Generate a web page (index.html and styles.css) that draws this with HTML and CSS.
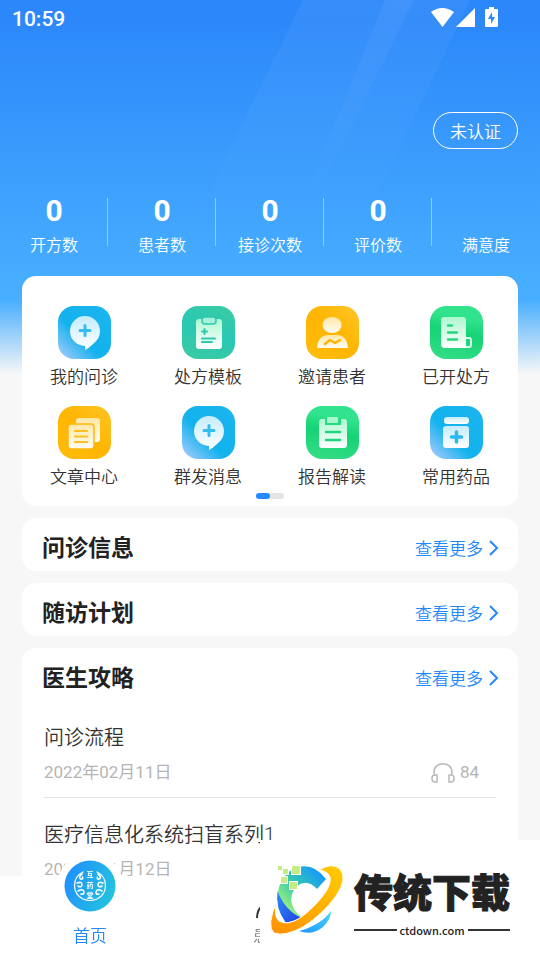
FILE: index.html
```html
<!DOCTYPE html>
<html lang="zh-CN">
<head>
<meta charset="utf-8">
<meta name="viewport" content="width=device-width, initial-scale=1">
<title>首页</title>
<link rel="stylesheet" href="styles.css">
</head>
<body>
<svg class="defs" aria-hidden="true">
  <defs>
    <linearGradient id="blue" x1="0" y1="1" x2="1" y2="0"><stop offset="0.08" stop-color="#94c8fb"/><stop offset="0.42" stop-color="#12b2ed"/><stop offset="1" stop-color="#1cb5ef"/></linearGradient>
    <linearGradient id="teal" x1="0.3" y1="1" x2="0.7" y2="0"><stop offset="0" stop-color="#3bcaa4"/><stop offset="0.5" stop-color="#29c7b4"/><stop offset="1" stop-color="#37cba6"/></linearGradient>
    <linearGradient id="amber" x1="0" y1="1" x2="1" y2="0"><stop offset="0" stop-color="#ffbd0c"/><stop offset="0.5" stop-color="#ffb502"/><stop offset="1" stop-color="#ffc525"/></linearGradient>
    <linearGradient id="green" x1="0.4" y1="1" x2="0.6" y2="0"><stop offset="0" stop-color="#32dc84"/><stop offset="0.5" stop-color="#15d375"/><stop offset="0.8" stop-color="#31e38c"/></linearGradient>
    <linearGradient id="whiteBlue" x1="0" y1="0" x2="0" y2="1"><stop offset="0" stop-color="#c5ecfd"/><stop offset="1" stop-color="#fff"/></linearGradient>
    <linearGradient id="whiteGreen" x1="0" y1="0" x2="0" y2="1"><stop offset="0" stop-color="#adf8d0"/><stop offset="1" stop-color="#fff"/></linearGradient>
    <linearGradient id="whiteAmber" x1="0" y1="0" x2="0" y2="1"><stop offset="0" stop-color="#ffe7a6"/><stop offset="1" stop-color="#fffdf4"/></linearGradient>
    <linearGradient id="home" x1="0" y1="0.3" x2="1" y2="0.7"><stop offset="0" stop-color="#2090fb"/><stop offset="1" stop-color="#24c4df"/></linearGradient>
    <linearGradient id="orbit" x1="0" y1="1" x2="1" y2="0"><stop offset="0" stop-color="#ff8f00"/><stop offset="1" stop-color="#ffcd00"/></linearGradient>
    <linearGradient id="arc" x1="0.1" y1="1" x2="0.9" y2="0.1"><stop offset="0.2" stop-color="#9cf07c"/><stop offset="0.55" stop-color="#35c9ae"/><stop offset="1" stop-color="#1298fb"/></linearGradient>
    <linearGradient id="deep" x1="0" y1="0" x2="1" y2="1"><stop offset="0" stop-color="#2f8dfb"/><stop offset="1" stop-color="#1f3fe0"/></linearGradient>
    <linearGradient id="tail" x1="0" y1="1" x2="1" y2="0"><stop offset="0" stop-color="#2393fb"/><stop offset="1" stop-color="#42d9ff"/></linearGradient>
  </defs>
</svg>

<div class="app">
  <header class="hero">
    <svg class="rays" viewBox="0 0 540 270" preserveAspectRatio="none" aria-hidden="true">
      <defs><linearGradient id="ray" x1="0" y1="0" x2="0" y2="1"><stop offset="0" stop-color="#fff" stop-opacity="0.05"/><stop offset="1" stop-color="#fff" stop-opacity="0"/></linearGradient></defs>
      <path fill="url(#ray)" d="M303 0H470L360 230H190Z"/>
      <path fill="url(#ray)" d="M385 0H414L310 210H300Z"/>
    </svg>
    <div class="status">
      <time>10:59</time>
      <svg class="status-icons" width="68" height="22" viewBox="0 0 68 22" fill="#fff" aria-label="状态">
        <path d="M1 5Q12-3 24 5L12.500 20ZM26 20L45 1V20Z"/>
        <path fill-rule="evenodd" d="M56 2h3V0h5v2h3q1 0 1 1v16q0 1-1 1H56q-1 0-1-1V3q0-1 1-1ZM62 5l-4 7h3v5l4-7h-3Z"/>
      </svg>
    </div>
    <div class="verify"><button type="button">未认证</button></div>
    <dl class="stats">
      <div><dt>开方数</dt><dd>0</dd></div>
      <div><dt>患者数</dt><dd>0</dd></div>
      <div><dt>接诊次数</dt><dd>0</dd></div>
      <div><dt>评价数</dt><dd>0</dd></div>
      <div><dt>满意度</dt><dd></dd></div>
    </dl>
  </header>

  <main class="content">
    <section class="card services">
      <a href="#"><svg viewBox="0 0 53 53"><rect width="53" height="53" rx="16" fill="url(#blue)"/><path fill="url(#whiteBlue)" d="M27 10a15 15 0 0 1 15 15q0 8-7 13-4 4-8 6v-4a15 15 0 0 1 0-30Z"/><path stroke="#35bcef" stroke-width="3" stroke-linecap="round" d="M27 19.500v10M22 24.500h10"/></svg>我的问诊</a>
      <a href="#"><svg viewBox="0 0 53 53"><rect width="53" height="53" rx="16" fill="url(#teal)"/><rect x="14" y="13" width="26" height="30" rx="3" fill="url(#whiteGreen)"/><rect x="20" y="11" width="14" height="7" rx="3" fill="#a8efd9" stroke="#2dc8ae" stroke-width="1.500"/><path stroke="#2dc8ae" stroke-width="2" stroke-linecap="round" d="M22.500 23v5M20 25.500h5M20 32.500h13M20 36h10"/></svg>处方模板</a>
      <a href="#"><svg viewBox="0 0 53 53"><rect width="53" height="53" rx="16" fill="url(#amber)"/><ellipse cx="26" cy="19" rx="9.500" ry="8" fill="url(#whiteAmber)"/><path fill="url(#whiteAmber)" d="M11 42q1-13 12-13h7q11 0 12 13Z"/><path fill="none" stroke="#ffb502" stroke-width="2.500" stroke-linecap="round" stroke-linejoin="round" d="M19 38l5-4 5 3 5-3"/></svg>邀请患者</a>
      <a href="#"><svg viewBox="0 0 53 53"><rect width="53" height="53" rx="16" fill="url(#green)"/><rect x="34.500" y="32" width="6.500" height="9" rx="2" fill="none" stroke="#d5ffe9" stroke-width="2"/><path fill="url(#whiteGreen)" d="M14 11h19q3 0 3 3v28H15q-4 0-4-4V14q0-3 3-3Z"/><path stroke="#27d67e" stroke-width="2.400" stroke-linecap="round" d="M18 19.500h4M18 26.500h9M18 33.500h9"/></svg>已开处方</a>
      <a href="#"><svg viewBox="0 0 53 53"><rect width="53" height="53" rx="16" fill="url(#amber)"/><rect x="18" y="12" width="24" height="24" rx="3" fill="url(#whiteAmber)"/><rect x="10" y="18" width="26" height="25" rx="3" fill="url(#whiteAmber)" stroke="#ffb80b" stroke-width="1.500"/><path stroke="#ffbd20" stroke-width="2.200" stroke-linecap="round" d="M17 25h12M17 30.500h12M17 36h12"/></svg>文章中心</a>
      <a href="#"><svg viewBox="0 0 53 53"><rect width="53" height="53" rx="16" fill="url(#blue)"/><path fill="url(#whiteBlue)" d="M27 10a15 15 0 0 1 15 15q0 8-7 13-4 4-8 6v-4a15 15 0 0 1 0-30Z"/><path stroke="#35bcef" stroke-width="3" stroke-linecap="round" d="M27 19.500v10M22 24.500h10"/></svg>群发消息</a>
      <a href="#"><svg viewBox="0 0 53 53"><rect width="53" height="53" rx="16" fill="url(#green)"/><rect x="13" y="13" width="28" height="29" rx="3" fill="url(#whiteGreen)"/><path fill="#25da80" d="M19 12h16v7H19Z"/><rect x="21" y="11" width="11" height="6" rx="1" fill="#a7f7cf"/><path stroke="#20d57b" stroke-width="2.400" stroke-linecap="round" d="M20 26h14M20 34h14"/></svg>报告解读</a>
      <a href="#"><svg viewBox="0 0 53 53"><rect width="53" height="53" rx="16" fill="url(#blue)"/><rect x="14" y="11" width="25" height="7" rx="3" fill="url(#whiteBlue)"/><rect x="13" y="20" width="26" height="22" rx="3" fill="url(#whiteBlue)"/><path stroke="#2bb9ef" stroke-width="3.500" stroke-linecap="round" d="M26.500 26v10M21.500 31h10"/></svg>常用药品</a>
      <span class="pager"></span>
    </section>

    <section class="card">
      <div class="title"><h2>问诊信息</h2><a href="#">查看更多<svg width="11" height="18" viewBox="0 0 11 18"><path d="M2 1l7 7-7 7"/></svg></a></div>
    </section>
    <section class="card">
      <div class="title"><h2>随访计划</h2><a href="#">查看更多<svg width="11" height="18" viewBox="0 0 11 18"><path d="M2 1l7 7-7 7"/></svg></a></div>
    </section>
    <section class="card guide">
      <div class="title"><h2>医生攻略</h2><a href="#">查看更多<svg width="11" height="18" viewBox="0 0 11 18"><path d="M2 1l7 7-7 7"/></svg></a></div>
      <article>
        <h3>问诊流程</h3>
        <div class="meta"><time>2022年02月11日</time><span class="plays"><svg width="24" height="22" viewBox="0 0 24 22"><path d="M3 13V10C3-1 21-1 21 10v3M6 13v7H4q-3 0-3-3v-1q0-3 3-3ZM18 13v7h2q3 0 3-3v-1q0-3-3-3Z"/></svg>84</span></div>
      </article>
      <article>
        <h3>医疗信息化系统扫盲系列1</h3>
        <div class="meta"><time>2022年01月12日</time></div>
      </article>
    </section>
  </main>

  <nav class="tabs">
    <a class="active" href="#">
      <svg class="home-icon" viewBox="0 0 66 66"><circle cx="33" cy="33" r="33" fill="#fff"/><circle cx="33" cy="33" r="25.500" fill="url(#home)"/><g fill="none" stroke="#fff" stroke-width="1.200" stroke-linecap="round"><path d="M26 19A15 15 0 0 0 26 46Q33 49 40 46A15 15 0 0 0 40 19"/><path stroke-width="1.600" d="M25 21q-4 3-1.500 5 3 .5 2-2M41 21q4 3 1.500 5-3 .5-2-2M20 30q5-2 5 2-1 3-4 1M46 30q-5-2-5 2 1 3 4 1M21 38q5-3 6 1 0 3-3 2M45 38q-5-3-6 1 0 3 3 2"/></g><g class="seal"><text x="33" y="24">互</text><text x="33" y="35">药</text><text x="33" y="45">堂</text></g></svg>
      <span>首页</span>
    </a>
    <a href="#">
      <svg class="user-icon" viewBox="0 0 32 32"><circle cx="16" cy="7" r="5"/><path d="M3 28Q3 21 7 17 11 14 16 14 29 14 29 28"/></svg>
      <span>患者</span>
    </a>
  </nav>

  <aside class="brand">
    <svg class="brand-mark" viewBox="0 0 90 80" aria-hidden="true">
      <path fill="url(#tail)" d="M35 73Q57 67 67 53Q67 61 59 69Q48 78 35 73Z"/>
      <path fill="url(#arc)" d="M62 21L53 31Q43 20 33 28Q22 40 32 54L38 60L22 65Q11 50 14 34Q17 15 34 9Q50 5 62 21Z"/>
      <path fill="url(#deep)" d="M13.500 33Q22 54 38 60L22 65Q11 50 13.500 33Z"/>
      <path fill="url(#orbit)" stroke="#fff" stroke-width="1" d="M55 12Q68 4 76 11Q84 20 72 38Q59 56 39 69Q20 79 10 75Q2 68 13 43Q9 58 15 63Q23 68 36 60Q50 50 61 35Q74 15 55 12Z"/>
      <g class="pixels" fill="#c5ed82"><path d="M14 8h4v4h-4zM19 11h5v5h-5zM28 8h8v8h-8zM17 19h6v6h-6zM26 24h7v7h-7z"/></g>
    </svg>
    <div class="brand-text"><strong>传统下载</strong><span>ctdown.com</span></div>
  </aside>
</div>
</body>
</html>
```
FILE: styles.css
```css
* { box-sizing: border-box; }
body {
  margin: 0;
  background: #f7f7f7;
  color: #333;
  font-family: Roboto, "Noto Sans CJK SC", sans-serif;
  font-weight: 350;
}
a { color: inherit; text-decoration: none; }
h2, h3, dl, dd { margin: 0; }
.defs { position: absolute; width: 0; height: 0; }
.app {
  height: 100vh;
  overflow: hidden;
  background: linear-gradient(#2c88fa 0, #2c88fa 20px, #46acff 270px, #48aeff 300px, #f7f7f7 374px);
}

.hero { color: #fff; }
.rays { position: absolute; top: 0; left: 0; width: 100%; height: 270px; }
.status, .verify, .stats { position: relative; }
.status {
  display: flex;
  justify-content: space-between;
  padding: 7px 42px 0 12px;
  height: 112px;
  font-size: 21px;
  font-weight: 500;
  line-height: 24px;
}
.verify { display: flex; justify-content: flex-end; padding-right: 22px; }
.verify button {
  height: 37px;
  padding: 0 16px;
  border: 1px solid #fff;
  border-radius: 19px;
  background: none;
  color: #fff;
  font: inherit;
  font-size: 17px;
}
.stats { display: grid; grid-template-columns: repeat(5, 1fr); padding-top: 49px; text-align: center; }
.stats div {
  display: flex;
  flex-direction: column-reverse;
  justify-content: flex-end;
  height: 78px;
  background: linear-gradient(#8fcbff, #8fcbff) right top / 1px 48px no-repeat;
}
.stats div:last-child { background: none; }
.stats dt { font-size: 16px; line-height: 24px; white-space: nowrap; }
.stats dd { height: 36px; font-size: 30px; font-weight: 700; line-height: 26px; }

.content { position: relative; display: flex; flex-direction: column; gap: 12px; padding: 0 22px; }
.card { border-radius: 14px; background: #fff; }
.services {
  display: grid;
  grid-template-columns: repeat(4, 1fr);
  row-gap: 12px;
  padding-top: 30px;
  font-size: 17px;
}
.services a { display: flex; flex-direction: column; align-items: center; gap: 6px; height: 88px; line-height: 24px; }
.services a svg { width: 53px; height: 53px; fill: none; }
.pager {
  grid-column: 1 / -1;
  justify-self: center;
  width: 28px;
  height: 6px;
  margin-top: -13px;
  border-radius: 3px;
  background: #e5e5e5;
}
.pager::before { content: ""; display: block; width: 14px; height: 6px; border-radius: 3px; background: #228dff; }

.title { display: flex; align-items: center; justify-content: space-between; height: 53px; padding: 9px 19px 0 20px; }
.title h2 { font-size: 23px; line-height: 32px; color: #222; }
.title a { display: flex; align-items: center; gap: 5px; font-size: 17px; line-height: 24px; color: #2389fa; }
.title svg { fill: none; stroke: #2389fa; stroke-width: 2; }
.guide { display: flex; flex-direction: column; height: 400px; }
.guide article { margin: 0 22px; padding: 21px 0 13px; border-bottom: 1px solid #e2e2e2; }
.guide h3 { font-size: 20px; font-weight: inherit; line-height: 32px; }
.meta { display: flex; justify-content: space-between; padding: 7px 17px 0 0; font-size: 17px; font-weight: 400; line-height: 23px; color: #b5b5b5; }
.plays { display: flex; align-items: center; gap: 5px; }
.plays svg { fill: none; stroke: #b9b9b9; stroke-width: 1.500; }

.tabs {
  position: fixed;
  right: 0;
  bottom: 0;
  left: 0;
  display: grid;
  grid-template-columns: repeat(3, 1fr);
  grid-template-rows: 84px;
  background: #fff;
  color: #888;
  font-size: 17px;
  line-height: 24px;
}
.tabs a { display: flex; flex-direction: column; align-items: center; justify-content: flex-end; min-height: 0; padding-bottom: 12px; }
.tabs .active { color: #2389fa; }
.home-icon { flex: none; width: 66px; height: 66px; margin-bottom: 5px; }
.user-icon { flex: none; width: 32px; height: 32px; margin-bottom: 2px; fill: none; stroke: #333; stroke-width: 2; }
.seal { font: 700 7px "Noto Sans CJK SC", sans-serif; fill: #fff; text-anchor: middle; }

.brand {
  position: fixed;
  right: 0;
  bottom: 0;
  display: flex;
  width: 280px;
  height: 120px;
  padding: 18px 30px 0 4px;
  background: #fff;
  color: #222;
}
.brand-mark { width: 90px; height: 80px; flex: none; }
.pixels { stroke: #fff; stroke-width: 2; paint-order: stroke; }
.brand-text { display: flex; flex-direction: column; }
.brand-text strong { font: 900 39px/64px "Noto Sans CJK SC", sans-serif; -webkit-text-stroke: 1px #222; white-space: nowrap; }
.brand-text span { display: flex; align-items: center; gap: 3px; font: 500 11px/16px "Noto Sans CJK SC", sans-serif; }
.brand-text span::before, .brand-text span::after { content: ""; flex: 1; height: 2px; background: #333; }
```
